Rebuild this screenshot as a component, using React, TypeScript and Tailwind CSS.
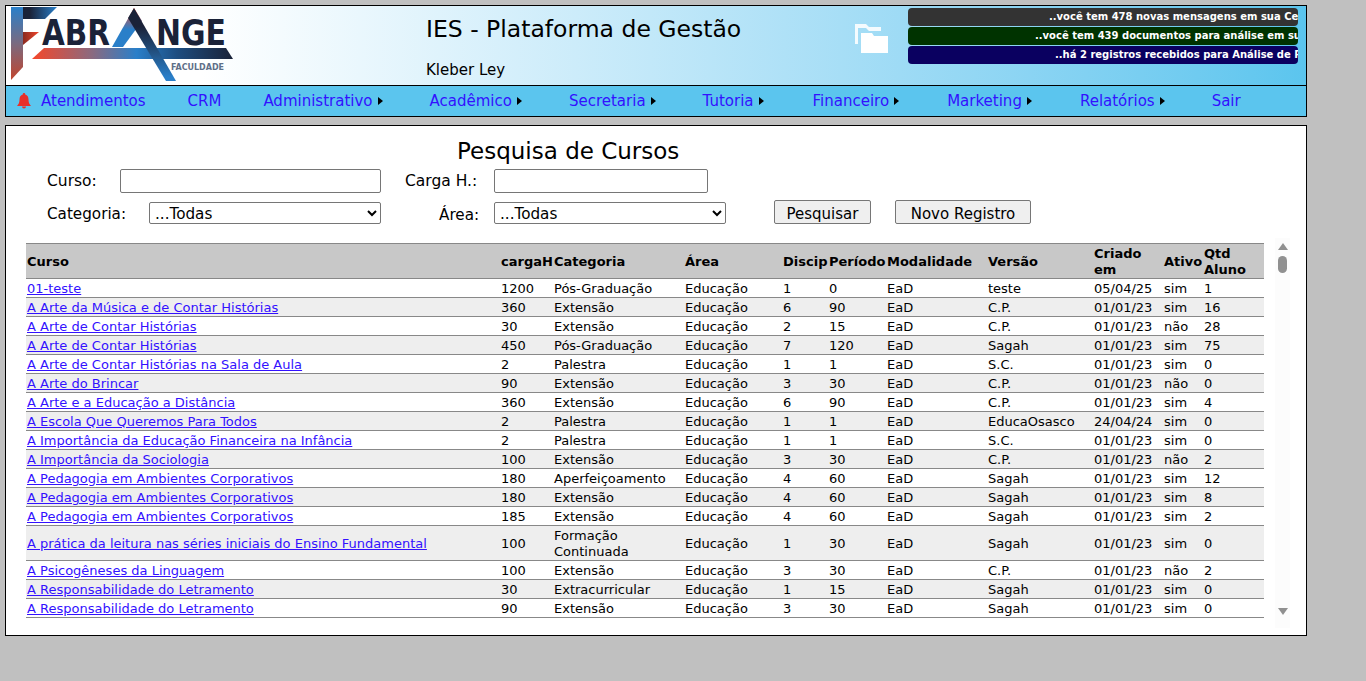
import React from "react";

const rows: string[][] = [
  ["01-teste","1200","Pós-Graduação","Educação","1","0","EaD","teste","05/04/25","sim","1"],
  ["A Arte da Música e de Contar Histórias","360","Extensão","Educação","6","90","EaD","C.P.","01/01/23","sim","16"],
  ["A Arte de Contar Histórias","30","Extensão","Educação","2","15","EaD","C.P.","01/01/23","não","28"],
  ["A Arte de Contar Histórias","450","Pós-Graduação","Educação","7","120","EaD","Sagah","01/01/23","sim","75"],
  ["A Arte de Contar Histórias na Sala de Aula","2","Palestra","Educação","1","1","EaD","S.C.","01/01/23","sim","0"],
  ["A Arte do Brincar","90","Extensão","Educação","3","30","EaD","C.P.","01/01/23","não","0"],
  ["A Arte e a Educação a Distância","360","Extensão","Educação","6","90","EaD","C.P.","01/01/23","sim","4"],
  ["A Escola Que Queremos Para Todos","2","Palestra","Educação","1","1","EaD","EducaOsasco","24/04/24","sim","0"],
  ["A Importância da Educação Financeira na Infância","2","Palestra","Educação","1","1","EaD","S.C.","01/01/23","sim","0"],
  ["A Importância da Sociologia","100","Extensão","Educação","3","30","EaD","C.P.","01/01/23","não","2"],
  ["A Pedagogia em Ambientes Corporativos","180","Aperfeiçoamento","Educação","4","60","EaD","Sagah","01/01/23","sim","12"],
  ["A Pedagogia em Ambientes Corporativos","180","Extensão","Educação","4","60","EaD","Sagah","01/01/23","sim","8"],
  ["A Pedagogia em Ambientes Corporativos","185","Extensão","Educação","4","60","EaD","Sagah","01/01/23","sim","2"],
  ["A prática da leitura nas séries iniciais do Ensino Fundamental","100","Formação Continuada","Educação","1","30","EaD","Sagah","01/01/23","sim","0"],
  ["A Psicogêneses da Linguagem","100","Extensão","Educação","3","30","EaD","C.P.","01/01/23","não","2"],
  ["A Responsabilidade do Letramento","30","Extracurricular","Educação","1","15","EaD","Sagah","01/01/23","sim","0"],
  ["A Responsabilidade do Letramento","90","Extensão","Educação","3","30","EaD","Sagah","01/01/23","sim","0"],
];

const widths = [474, 53, 131, 98, 46, 58, 101, 106, 70, 40, 61];
const heads = ["Curso","cargaH","Categoria","Área","Discip","Período","Modalidade","Versão","Criado em","Ativo","Qtd Aluno"];

const nav: [string, boolean, string][] = [
  ["Atendimentos", false, "ml-[10px]"],
  ["CRM", false, "ml-[42px]"],
  ["Administrativo", true, "ml-[42px]"],
  ["Acadêmico", true, "ml-[47px]"],
  ["Secretaria", true, "ml-[47px]"],
  ["Tutoria", true, "ml-[47px]"],
  ["Financeiro", true, "ml-[49px]"],
  ["Marketing", true, "ml-[48px]"],
  ["Relatórios", true, "ml-[48px]"],
  ["Sair", false, "ml-[47px]"],
];

function Logo() {
  return (
    <svg width="232" height="79" viewBox="0 0 232 79" className="block shrink-0">
      <defs>
        <linearGradient id="fv" x1="0" y1="0" x2="0" y2="1">
          <stop offset="0" stopColor="#2a7fc9" />
          <stop offset="0.5" stopColor="#7a6a80" />
          <stop offset="1" stopColor="#c2452e" />
        </linearGradient>
        <linearGradient id="ft" x1="0" y1="0" x2="1" y2="0">
          <stop offset="0.2" stopColor="#1a2238" />
          <stop offset="1" stopColor="#2a7fc9" />
        </linearGradient>
        <linearGradient id="fm" x1="0" y1="0" x2="1" y2="0">
          <stop offset="0" stopColor="#8a2a20" />
          <stop offset="1" stopColor="#f0452a" />
        </linearGradient>
        <linearGradient id="sw" x1="0" y1="0" x2="1" y2="0">
          <stop offset="0" stopColor="#f5472a" />
          <stop offset="0.3" stopColor="#8a6a80" />
          <stop offset="0.52" stopColor="#2a7fc9" />
          <stop offset="0.72" stopColor="#1e4d80" />
          <stop offset="1" stopColor="#1a2238" />
        </linearGradient>
        <linearGradient id="al" x1="0" y1="0" x2="0" y2="1">
          <stop offset="0" stopColor="#f5472a" />
          <stop offset="0.55" stopColor="#2a7fc9" />
          <stop offset="1" stopColor="#2a7fc9" />
        </linearGradient>
        <linearGradient id="ar" x1="0" y1="0" x2="0" y2="1">
          <stop offset="0.25" stopColor="#1a2238" />
          <stop offset="0.95" stopColor="#2a7fc9" />
        </linearGradient>
      </defs>
      <polygon points="5,1 17,1 17,61 5,74" fill="url(#fv)" />
      <polygon points="17,1 51,1 39,13 17,13" fill="url(#ft)" />
      <polygon points="17,26 33,26 17,39" fill="url(#fm)" />
      <text x="36" y="39" fontFamily="'DejaVu Sans', sans-serif" fontWeight="700" fontSize="35" textLength="68" lengthAdjust="spacingAndGlyphs" fill="#1a2238">ABR</text>
      <text x="150" y="39" fontFamily="'DejaVu Sans', sans-serif" fontWeight="700" fontSize="35" textLength="70" lengthAdjust="spacingAndGlyphs" fill="#1a2238">NGE</text>
      <polygon points="26,53 38,42 220,42 227,53" fill="url(#sw)" />
      <polygon points="128,2 136,15 117,41 106,41" fill="url(#al)" />
      <polygon points="128,2 170,75 160,75 122,12" fill="url(#ar)" />
      <text x="165" y="64" fontFamily="'DejaVu Sans', sans-serif" fontWeight="700" fontSize="8" textLength="53" lengthAdjust="spacing" fill="#5f6f88">FACULDADE</text>
    </svg>
  );
}

function Folder() {
  return (
    <svg width="33" height="30" viewBox="0 0 33 30" className="block">
      <path d="M0 20V0h11l3 3h12v4H14l-3-3H3v16z" fill="#f4fbfe" />
      <path d="M6 29V9h11l2 3h14v17z" fill="#ffffff" />
    </svg>
  );
}

function Bell() {
  return (
    <svg width="14" height="16" viewBox="0 0 14 16" className="block">
      <path d="M7 0a1.200 1.200 0 0 1 1.200 1.400C10.500 2 11.500 4 11.500 6.500c0 3 .8 4.500 2.500 6.500H0c1.700-2 2.500-3.500 2.500-6.500 0-2.500 1-4.500 3.300-5.100A1.200 1.200 0 0 1 7 0z" fill="#e8302a" />
      <path d="M5 13.500h4a2 2 0 0 1-4 0z" fill="#e8302a" />
    </svg>
  );
}

function Caret() {
  return <span className="ml-[5px] inline-block h-0 w-0 border-y-[4px] border-l-[5px] border-y-transparent border-l-black" />;
}

function Message({ text, color, pad }: { text: string; color: string; pad: string }) {
  return (
    <div className={`h-[18px] overflow-hidden whitespace-nowrap rounded-[4px] text-[10px] font-bold leading-[17px] text-white ${color} ${pad}`}>
      {text}
    </div>
  );
}

export default function App() {
  return (
    <div className="h-[681px] overflow-hidden bg-[#c0c0c0] pl-[5px] pt-[5px] font-['DejaVu_Sans',Verdana,sans-serif] text-black">
      <div className="w-[1302px] border border-black">
        <header className="flex h-[79px] bg-linear-to-r from-white from-[15%] to-[#5bc5ee]">
          <div className="w-[420px]">
            <Logo />
          </div>
          <div className="w-[429px] pt-[9px]">
            <div className="text-[23.5px] leading-[28px]">IES - Plataforma de Gestão</div>
            <div className="mt-[18px] text-[15px] leading-[18px]">Kleber Ley</div>
          </div>
          <div className="w-[53px] pt-[18px]">
            <Folder />
          </div>
          <div className="flex w-[390px] flex-col gap-[1px] pt-[2px]">
            <Message text="..você tem 478 novas mensagens em sua Central de Mensagens" color="bg-[#333333]" pad="pl-[141px]" />
            <Message text="..você tem 439 documentos para análise em sua Secretaria" color="bg-[#003300]" pad="pl-[127px]" />
            <Message text="..há 2 registros recebidos para Análise de Pagamento" color="bg-[#0a0060]" pad="pl-[147px]" />
          </div>
        </header>
        <nav className="flex h-[31px] items-center border-t border-black bg-[#5bc5ee] text-[15px] text-[#3311ff]">
          <span className="ml-[11px]"><Bell /></span>
          {nav.map(([label, caret, ml]) => (
            <span key={label} className={`flex items-center ${ml}`}>
              {label}
              {caret && <Caret />}
            </span>
          ))}
        </nav>
      </div>

      <main className="mt-[8px] h-[511px] w-[1302px] border border-black bg-white">
        <h1 className="pl-[451px] pt-[11px] text-[23px] leading-[28px]">Pesquisa de Cursos</h1>
        <div className="mt-[4px] flex h-[24px] items-start text-[15.5px]">
          <label className="ml-[41px] w-[73px] pt-[1px]">Curso:</label>
          <input className="h-[24px] w-[261px] rounded-[2px] border border-[#767676] bg-white" />
          <label className="ml-[24px] w-[89px] pt-[1px]">Carga H.:</label>
          <input className="h-[24px] w-[214px] rounded-[2px] border border-[#767676] bg-white" />
        </div>
        <div className="mt-[7px] flex h-[24px] items-start text-[15.2px]">
          <label className="ml-[41px] w-[102px] pt-[3px]">Categoria:</label>
          <select className="h-[22px] w-[232px] self-end rounded-[2px] border border-[#767676] bg-white pl-[1px] pt-[1px]">
            <option>...Todas</option>
          </select>
          <label className="ml-[58px] w-[55px] pt-[4px]">Área:</label>
          <select className="h-[22px] w-[232px] self-end rounded-[2px] border border-[#767676] bg-white pl-[1px] pt-[1px]">
            <option>...Todas</option>
          </select>
          <button className="ml-[48px] h-[24px] w-[97px] rounded-[2px] border border-[#767676] bg-[#efefef] pt-[2px] text-[15px]">Pesquisar</button>
          <button className="ml-[24px] h-[24px] w-[136px] rounded-[2px] border border-[#767676] bg-[#efefef] pt-[2px] text-[15px]">Novo Registro</button>
        </div>

        <div className="mt-[14px] flex pl-[20px]">
          <div className="h-[380px] w-[1238px] overflow-hidden pt-[5px]">
            <table className="w-[1238px] table-fixed border-collapse text-[13px] leading-[16px]">
              <colgroup>
                {widths.map((w, i) => (
                  <col key={i} style={{ width: w }} />
                ))}
              </colgroup>
              <thead>
                <tr className="h-[35px] border-y border-[#888888] bg-[#c8c8c8]">
                  {heads.map((h) => (
                    <th key={h} className="whitespace-normal p-0 pl-[1px] pt-[2px] text-left font-bold">{h}</th>
                  ))}
                </tr>
              </thead>
              <tbody>
                {rows.map((r, i) => (
                  <tr key={i} className={`border-b border-[#888888] ${i % 2 ? "bg-[#eeeeee]" : "bg-white"}`}>
                    {r.map((c, j) => (
                      <td key={j} className="p-0 pl-[1px] pt-[2px]">
                        {j === 0 ? <a className="whitespace-nowrap text-[#3311ff] underline">{c}</a> : c}
                      </td>
                    ))}
                  </tr>
                ))}
              </tbody>
            </table>
          </div>
          <div className="relative ml-[11px] h-[390px] w-[15px] bg-[#fcfcfc]">
            <span className="absolute left-[3px] top-[5px] h-0 w-0 border-x-[5px] border-b-[7px] border-x-transparent border-b-[#909090]" />
            <span className="absolute left-[3px] top-[18px] h-[17px] w-[9px] rounded-[5px] bg-[#909090]" />
            <span className="absolute left-[3px] top-[370px] h-0 w-0 border-x-[5px] border-t-[7px] border-x-transparent border-t-[#909090]" />
          </div>
        </div>
      </main>
    </div>
  );
}
